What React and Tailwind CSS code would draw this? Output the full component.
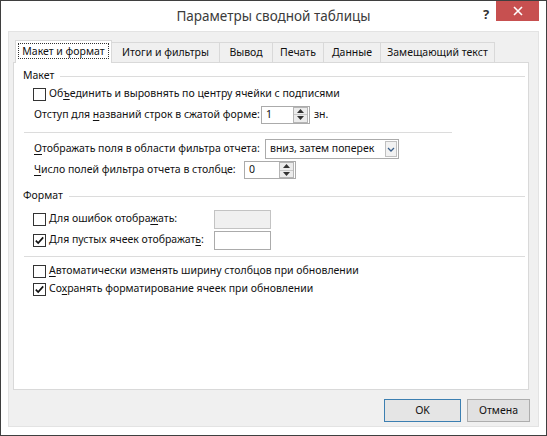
import React from "react";

const FONT = { fontFamily: '"Noto Sans", "Open Sans", sans-serif' };

function CheckBox({ checked }) {
  return (
    <div className="w-[13px] h-[13px] border border-[#333] bg-white flex items-center justify-center shrink-0">
      {checked && (
        <svg width="11" height="11" viewBox="0 0 11 11">
          <path d="M1.8 5.6 L4.2 8 L9.2 2.4" fill="none" stroke="#111" strokeWidth="1.7" />
        </svg>
      )}
    </div>
  );
}

function Spinner() {
  return (
    <div className="w-[15px] h-[16px] border border-[#b5b5b5] bg-[#ececec] flex flex-col">
      <div className="flex-1 flex items-center justify-center border-b border-[#c8c8c8]">
        <svg width="7" height="4" viewBox="0 0 7 4"><path d="M0 4 L3.5 0 L7 4 Z" fill="#333" /></svg>
      </div>
      <div className="flex-1 flex items-center justify-center">
        <svg width="7" height="4" viewBox="0 0 7 4"><path d="M0 0 L3.5 4 L7 0 Z" fill="#333" /></svg>
      </div>
    </div>
  );
}

function NumInput({ value, width }) {
  return (
    <div className={`${width} h-[18px] border border-[#ababab] bg-white flex items-center justify-between pl-[4px] pr-[1px] shrink-0`}>
      <span>{value}</span>
      <Spinner />
    </div>
  );
}

function Group({ title }) {
  return (
    <div className="h-[16px] flex items-center gap-[6px]">
      <span>{title}</span>
      <div className="flex-1 h-px bg-[#dcdcdc] mr-[3px]" />
    </div>
  );
}

function U({ children }) {
  return <span className="underline underline-offset-2">{children}</span>;
}

const tabs = [
  { label: "Макет и формат", w: "w-[97px]", active: true },
  { label: "Итоги и фильтры", w: "w-[109px]" },
  { label: "Вывод", w: "w-[54px]" },
  { label: "Печать", w: "w-[52px]" },
  { label: "Данные", w: "w-[58px]" },
  { label: "Замещающий текст", w: "w-[115px]" },
];

export default function App() {
  return (
    <div style={FONT} className="w-[547px] h-[436px] border border-[#3f3f3f] bg-white flex flex-col text-[10.5px] text-[#111] overflow-hidden whitespace-nowrap">
      {/* заголовок */}
      <div className="h-[30px] relative flex items-center justify-center shrink-0">
        <span className="text-[13.5px] text-[#3b3b3b] mt-[1px]">Параметры сводной таблицы</span>
        <span className="absolute left-[482px] top-[4px] text-[13px] font-bold text-[#333]">?</span>
        <div className="absolute left-[495px] top-[-1px] w-[43px] h-[21px] bg-[#c75050] flex items-center justify-center">
          <svg width="10" height="10" viewBox="0 0 10 10">
            <path d="M1 1 L9 9 M9 1 L1 9" stroke="#fff" strokeWidth="1.6" />
          </svg>
        </div>
      </div>

      <div className="mx-[7px] h-[396px] bg-[#f0f0f0] border border-[#e3e3e3] flex flex-col pl-[4px] pr-[9px] pt-[7px]">
        {/* вкладки */}
        <div className="flex items-end h-[23px] pl-[2px]">
          {tabs.map((t) =>
            t.active ? (
              <div key={t.label} className={`${t.w} h-[23px] bg-white border border-[#d9d9d9] border-b-0 flex items-center justify-center relative z-10 -mb-px pb-[2px]`}>
                <span className="border border-dotted border-[#333] px-[3px] leading-[14px]">{t.label}</span>
              </div>
            ) : (
              <div key={t.label} className={`${t.w} h-[20px] bg-[#f0f0f0] border border-[#d9d9d9] border-b-0 -ml-px flex items-center justify-center`}>
                {t.label}
              </div>
            )
          )}
        </div>

        {/* панель */}
        <div className="h-[328px] bg-white border border-[#d9d9d9] flex flex-col pl-[9px] pt-[5px]">
          <Group title="Макет" />
          <div className="h-[20px] flex items-center pl-[10px] gap-[3px]">
            <CheckBox />
            <span>Об<U>ъ</U>единить и выровнять по центру ячейки с подписями</span>
          </div>
          <div className="h-[19px] mt-[1px] flex items-center pl-[11px]">
            <span className="w-[227px] shrink-0">Отступ для <U>н</U>азваний строк в сжатой форме:</span>
            <NumInput value="1" width="w-[49px]" />
            <span className="ml-[4px]">зн.</span>
          </div>
          <div className="mt-[8px] h-px w-[428px] bg-[#dcdcdc] ml-[1px]" />
          <div className="h-[20px] mt-[6px] flex items-center pl-[11px]">
            <span className="w-[231px] shrink-0"><U>О</U>тображать поля в области фильтра отчета:</span>
            <div className="w-[134px] h-[20px] border border-[#ababab] bg-white flex items-center justify-between pl-[4px] pr-px">
              <span>вниз, затем поперек</span>
              <div className="w-[12px] h-[16px] border border-[#c0c0c0] bg-[#f2f2f2] flex items-center justify-center">
                <svg width="8" height="5" viewBox="0 0 8 5"><path d="M1 1 L4 4 L7 1" fill="none" stroke="#3a5f8a" strokeWidth="1.3" /></svg>
              </div>
            </div>
          </div>
          <div className="h-[20px] mt-px flex items-center pl-[11px]">
            <span className="w-[210px] shrink-0"><U>Ч</U>исло полей фильтра отчета в столбце:</span>
            <NumInput value="0" width="w-[52px]" />
          </div>

          <div className="mt-[8px]">
            <Group title="Формат" />
          </div>
          <div className="h-[20px] mt-[5px] flex items-center pl-[10px]">
            <div className="w-[181px] shrink-0 flex items-center gap-[3px]">
              <CheckBox />
              <span>Для ошибок отобра<U>ж</U>ать:</span>
            </div>
            <div className="w-[57px] h-[19px] border border-[#c3c3c3] bg-[#f0f0f0]" />
          </div>
          <div className="h-[20px] mt-px flex items-center pl-[10px]">
            <div className="w-[181px] shrink-0 flex items-center gap-[3px]">
              <CheckBox checked />
              <span>Для пустых ячеек отображат<U>ь</U>:</span>
            </div>
            <div className="w-[57px] h-[19px] border border-[#ababab] bg-white" />
          </div>
          <div className="mt-[6px] h-px bg-[#dcdcdc] ml-[1px] mr-[3px]" />
          <div className="h-[18px] mt-[5px] flex items-center pl-[10px] gap-[3px]">
            <CheckBox />
            <span><U>А</U>втоматически изменять ширину столбцов при обновлении</span>
          </div>
          <div className="h-[18px] flex items-center pl-[10px] gap-[3px]">
            <CheckBox checked />
            <span>Со<U>х</U>ранять форматирование ячеек при обновлении</span>
          </div>
        </div>

        {/* кнопки */}
        <div className="flex justify-end gap-[6px] mt-[9px] mr-[-1px]">
          <button className="w-[77px] h-[23px] border border-[#3c7fb1] bg-[#e5e5e5] text-[#111]">OK</button>
          <button className="w-[63px] h-[23px] border border-[#adadad] bg-[#e1e1e1] text-[#111]">Отмена</button>
        </div>
      </div>
    </div>
  );
}
